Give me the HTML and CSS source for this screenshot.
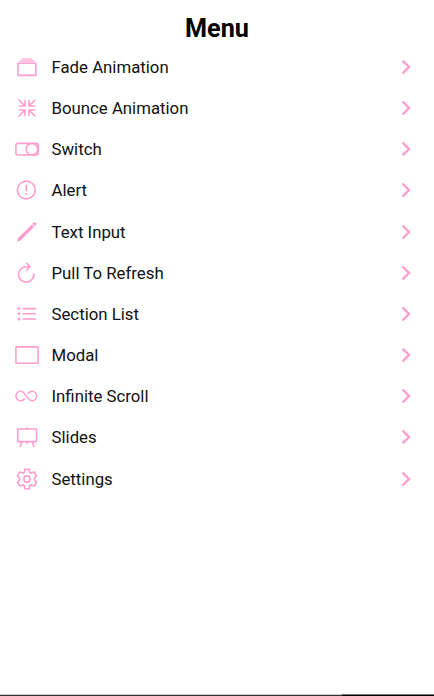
FILE: index.html
```html
<!DOCTYPE html>
<html lang="en">
<head>
<meta charset="utf-8">
<title>Menu</title>
<link rel="stylesheet" href="styles.css">
</head>
<body>
<main class="screen">
<h1 class="title">Menu</h1>
<ul class="menu">
<li class="item"><svg class="icon" viewBox="0 0 26 26"><path d="M4 9.200h17.800v12.200H4z"/><path class="soft" d="M6.200 7.200h13.600M8.600 5.100h9"/></svg><span class="label">Fade Animation</span><svg class="chevron" viewBox="0 0 10 16"><path d="M1.500 1.500 8 8l-6.500 6.500"/></svg></li>
<li class="item"><svg class="icon" viewBox="0 0 26 26"><path d="M5 5l6 6M11 5.500V11H5.500M21 5l-6 6M15 5.500V11h5.500M5 21l6-6M5.500 15H11v5.500M21 21l-6-6M20.500 15H15v5.500"/></svg><span class="label">Bounce Animation</span><svg class="chevron" viewBox="0 0 10 16"><path d="M1.500 1.500 8 8l-6.500 6.500"/></svg></li>
<li class="item"><svg class="icon" viewBox="0 0 26 26"><rect x="1.900" y="7.400" width="22.300" height="11.600" rx="2"/><circle cx="17.900" cy="13.200" r="5.700"/></svg><span class="label">Switch</span><svg class="chevron" viewBox="0 0 10 16"><path d="M1.500 1.500 8 8l-6.500 6.500"/></svg></li>
<li class="item"><svg class="icon" viewBox="0 0 26 26"><circle cx="12.300" cy="13" r="8.900"/><path d="M12.300 8.300v5.700"/><circle class="solid" cx="12.300" cy="17" r="1.100"/></svg><span class="label">Alert</span><svg class="chevron" viewBox="0 0 10 16"><path d="M1.500 1.500 8 8l-6.500 6.500"/></svg></li>
<li class="item"><svg class="icon" viewBox="0 0 26 26"><path class="solid" d="M3 22.800l1.100-3.700L17.800 5.400l2.400 2.400L6.500 21.400zM18.400 4.800l1.200-1.200q1.100-.8 2.200.2t.2 2.200L20.800 7.200z"/></svg><span class="label">Text Input</span><svg class="chevron" viewBox="0 0 10 16"><path d="M1.500 1.500 8 8l-6.500 6.500"/></svg></li>
<li class="item"><svg class="icon" viewBox="0 0 26 26"><path d="M19.900 14.400A7.700 7.700 0 1 1 12.200 6.700h3.700M12.600 3.300 16.100 6.800l-3.500 3.500"/></svg><span class="label">Pull To Refresh</span><svg class="chevron" viewBox="0 0 10 16"><path d="M1.500 1.500 8 8l-6.500 6.500"/></svg></li>
<li class="item"><svg class="icon" viewBox="0 0 26 26"><path d="M9 7.600h12.500M9 12.800h12.500M9 18h12.500"/><circle class="solid" cx="5" cy="7.600" r="1.500"/><circle class="solid" cx="5" cy="12.800" r="1.500"/><circle class="solid" cx="5" cy="18" r="1.500"/></svg><span class="label">Section List</span><svg class="chevron" viewBox="0 0 10 16"><path d="M1.500 1.500 8 8l-6.500 6.500"/></svg></li>
<li class="item"><svg class="icon" viewBox="0 0 26 26"><rect x="1.900" y="4.900" width="22.200" height="16.400" rx=".7"/></svg><span class="label">Modal</span><svg class="chevron" viewBox="0 0 10 16"><path d="M1.500 1.500 8 8l-6.500 6.500"/></svg></li>
<li class="item"><svg class="icon" viewBox="0 0 26 26"><path d="M10.400 15.900C9.300 17.100 8.100 17.700 6.700 17.700a4.700 4.700 0 0 1 0-9.400c4.600 0 6.300 9.400 11.200 9.400a4.700 4.700 0 0 0 0-9.400c-1.400 0-2.600.6-3.700 1.800"/></svg><span class="label">Infinite Scroll</span><svg class="chevron" viewBox="0 0 10 16"><path d="M1.500 1.500 8 8l-6.500 6.500"/></svg></li>
<li class="item"><svg class="icon" viewBox="0 0 26 26"><path d="M3.700 5h18.800v12.600H3.700zM13 3.900V5M13 17.600v2.200M7.900 17.600l-1.700 4.900M18.200 17.600l1.700 4.900"/></svg><span class="label">Slides</span><svg class="chevron" viewBox="0 0 10 16"><path d="M1.500 1.500 8 8l-6.500 6.500"/></svg></li>
<li class="item"><svg class="icon" viewBox="0 0 26 26"><path d="M10.600 3.200h4.800v1.700q0 2.200 2 2.200l2.900-1.100 2.300 3.900-1.400 1.200q-1.600 1.900 0 3.800l1.400 1.200-2.300 3.900-2.900-1.100q-2 0-2 2.200v1.700h-4.800v-1.700q0-2.200-2-2.200l-2.900 1.100-2.300-3.900 1.400-1.200q1.600-1.900 0-3.800L3.400 9.900 5.700 6l2.900 1.100q2 0 2-2.200z"/><circle cx="13" cy="13" r="3.100"/></svg><span class="label">Settings</span><svg class="chevron" viewBox="0 0 10 16"><path d="M1.500 1.500 8 8l-6.500 6.500"/></svg></li>
</ul>
<footer class="edge"><div class="edge-dark"></div></footer>
</main>
</body>
</html>
```
FILE: styles.css
```css
body { margin: 0; background: #fff; color: #111; font-family: Roboto, sans-serif; }
.screen { height: 696px; display: flex; flex-direction: column; overflow: hidden; }
.title { margin: 0; box-sizing: border-box; padding-top: 9px; height: 46.400px; line-height: 39px; font-size: 25.200px; font-weight: 700; text-align: center; color: #000; }
.menu { list-style: none; margin: 0; padding: 0 23px 0 14px; flex: 1; }
.item { display: flex; align-items: center; height: 41.170px; }
.icon { width: 26px; height: 26px; margin-right: 11.500px; }
.icon, .chevron { flex: none; fill: none; stroke: #ff9dce; stroke-width: 1.600; stroke-linejoin: round; stroke-linecap: round; }
.icon .solid { fill: #ff9dce; stroke: none; }
.icon .soft { stroke: #ffb9dc; stroke-width: 1.800; }
.label { flex: 1; font-size: 16.800px; line-height: 22px; }
.chevron { width: 10px; height: 16px; stroke-width: 2.400; stroke-linecap: butt; stroke-linejoin: miter; }
.edge { height: 2px; background: linear-gradient(#ccc 50%, #333 50%); }
.edge-dark { width: 92px; height: 2px; margin-left: auto; background: linear-gradient(#777 50%, #000 50%); }
```
